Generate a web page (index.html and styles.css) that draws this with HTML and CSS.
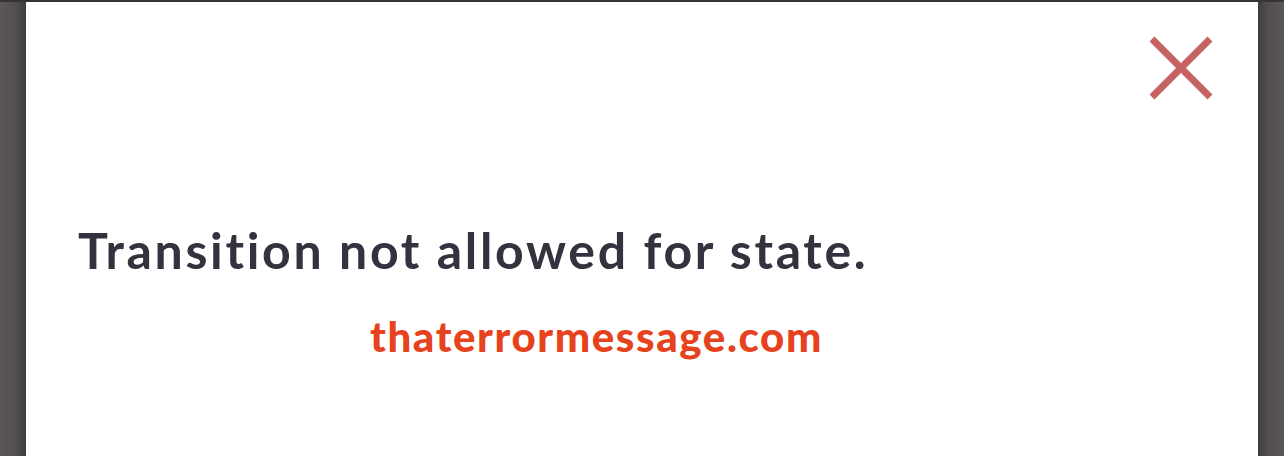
FILE: index.html
```html
<!DOCTYPE html>
<html>
<head>
<meta charset="utf-8">
<link rel="stylesheet" href="styles.css">
</head>
<body>
<div class="frame">
  <div class="dialog">
    <div class="top">
      <svg class="close" width="64" height="64" viewBox="0 0 64 64">
        <path d="M3 3 L61 61 M61 3 L3 61" stroke="#c56462" stroke-width="7" fill="none"/>
      </svg>
    </div>
    <h1 class="title">Transition not allowed for state.</h1>
    <div class="site">thaterrormessage.com</div>
  </div>
</div>
</body>
</html>
```
FILE: styles.css
```css
html, body {
  margin: 0;
  padding: 0;
  width: 1284px;
  height: 456px;
  overflow: hidden;
}
body {
  background: linear-gradient(to right, #5b5659 0px, #524e51 16px, #3f3c3e 26px, #3f3c3e 1258px, #524e51 1268px, #5b5659 1284px);
}
.frame {
  padding: 2px 26px 0 26px;
  height: 454px;
  background: linear-gradient(to bottom, #363335 0, #363335 2px, transparent 2px);
}
.dialog {
  background: #ffffff;
  height: 454px;
  display: flex;
  flex-direction: column;
}
.top {
  display: flex;
  justify-content: flex-end;
  padding: 34px 45px 0 0;
  height: 64px;
}
.close {
  display: block;
}
.title {
  margin: 122px 0 0 52px;
  font-family: "Lato", "Noto Sans", sans-serif;
  font-weight: 700;
  font-size: 50px;
  line-height: 56px;
  color: #35313e;
  letter-spacing: 2.65px;
}
.site {
  margin: 36px 0 0 344px;
  font-family: "Lato", "Noto Sans", sans-serif;
  font-weight: 900;
  font-size: 42px;
  line-height: 44px;
  color: #e6421d;
  letter-spacing: 1.6px;
}
```
